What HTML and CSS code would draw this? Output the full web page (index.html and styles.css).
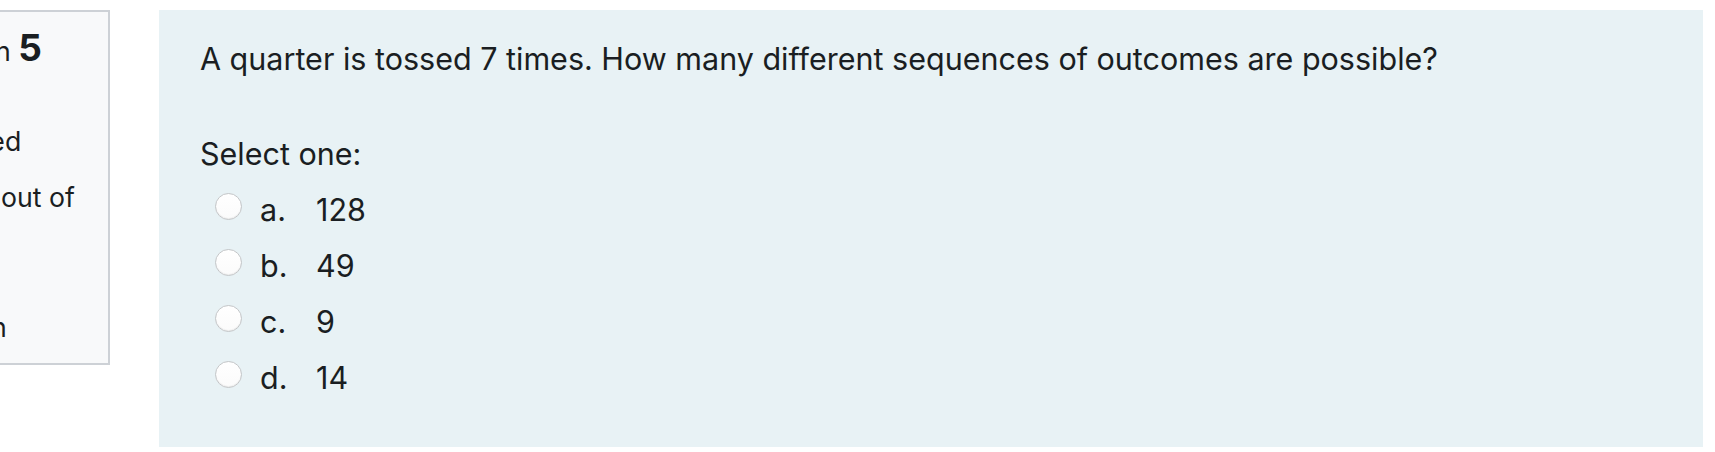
FILE: index.html
```html
<!DOCTYPE html>
<html lang="en">
<head>
<meta charset="utf-8">
<title>Question 5</title>
<link rel="stylesheet" href="styles.css">
</head>
<body>
<div class="page">
  <div class="info">
    <h3 class="qno">Question <span class="num">5</span></h3>
    <div class="state">Not yet answered</div>
    <div class="grade">Marked out of 1.00</div>
    <div class="flag"><svg class="flag-icon" viewBox="0 0 16 16" width="22" height="22"><path d="M3 1v14M3 2h9l-2 3 2 3H3" fill="none" stroke="#1d2125" stroke-width="1.5"/></svg>Flag question</div>
  </div>
  <div class="formulation">
    <p class="qtext">A quarter is tossed 7 times. How many different sequences of outcomes are possible?</p>
    <p class="prompt">Select one:</p>
    <div class="answers">
      <div class="opt"><span class="radio"></span><span class="letter">a.</span><span class="val">128</span></div>
      <div class="opt"><span class="radio"></span><span class="letter">b.</span><span class="val">49</span></div>
      <div class="opt"><span class="radio"></span><span class="letter">c.</span><span class="val">9</span></div>
      <div class="opt"><span class="radio"></span><span class="letter">d.</span><span class="val">14</span></div>
    </div>
  </div>
</div>
</body>
</html>
```
FILE: styles.css
```css
html, body {
  margin: 0;
  padding: 0;
  background: #ffffff;
  overflow: hidden;
}
body {
  font-family: Inter, "Noto Sans", "Liberation Sans", sans-serif;
  color: #1a1e22;
}
.page {
  display: flex;
  align-items: flex-start;
  padding-top: 10px;
}
.info {
  flex: none;
  box-sizing: border-box;
  width: 229px;
  height: 355px;
  margin-left: -119px;
  margin-right: 49px;
  padding: 15px 20px 0 15px;
  border: 2px solid #cdd1d6;
  background: #f8f9fa;
  font-size: 26.7px;
  line-height: 37px;
}
.qno {
  margin: 0;
  font-size: 26.7px;
  font-weight: 400;
  line-height: 48px;
}
.qno .num {
  font-size: 37px;
  font-weight: 700;
  line-height: 1;
}
.state {
  margin-top: 11px;
}
.grade {
  margin-top: 19px;
}
.flag {
  margin-top: 19px;
}
.flag-icon {
  vertical-align: -3px;
  margin-right: 8px;
}
.formulation {
  flex: none;
  box-sizing: border-box;
  width: 1544px;
  height: 437px;
  padding: 27px 41px 0 41px;
  background: #e8f2f5;
  font-size: 30.5px;
  line-height: 44px;
}
.qtext {
  margin: 0;
}
.prompt {
  margin: 51px 0 0 0;
}
.answers {
  margin-top: 6px;
  display: flex;
  flex-direction: column;
}
.opt {
  display: flex;
  align-items: center;
  height: 56px;
}
.radio {
  flex: none;
  box-sizing: border-box;
  width: 27px;
  height: 27px;
  margin-left: 15px;
  margin-right: 18px;
  margin-bottom: 8px;
  border-radius: 50%;
  border: 1px solid #c4c6c8;
  background: linear-gradient(#ffffff, #fbfbfb);
  box-shadow: inset 0 -1px 1px rgba(0, 0, 0, 0.06);
}
.letter {
  display: inline-block;
  width: 56px;
}
```
